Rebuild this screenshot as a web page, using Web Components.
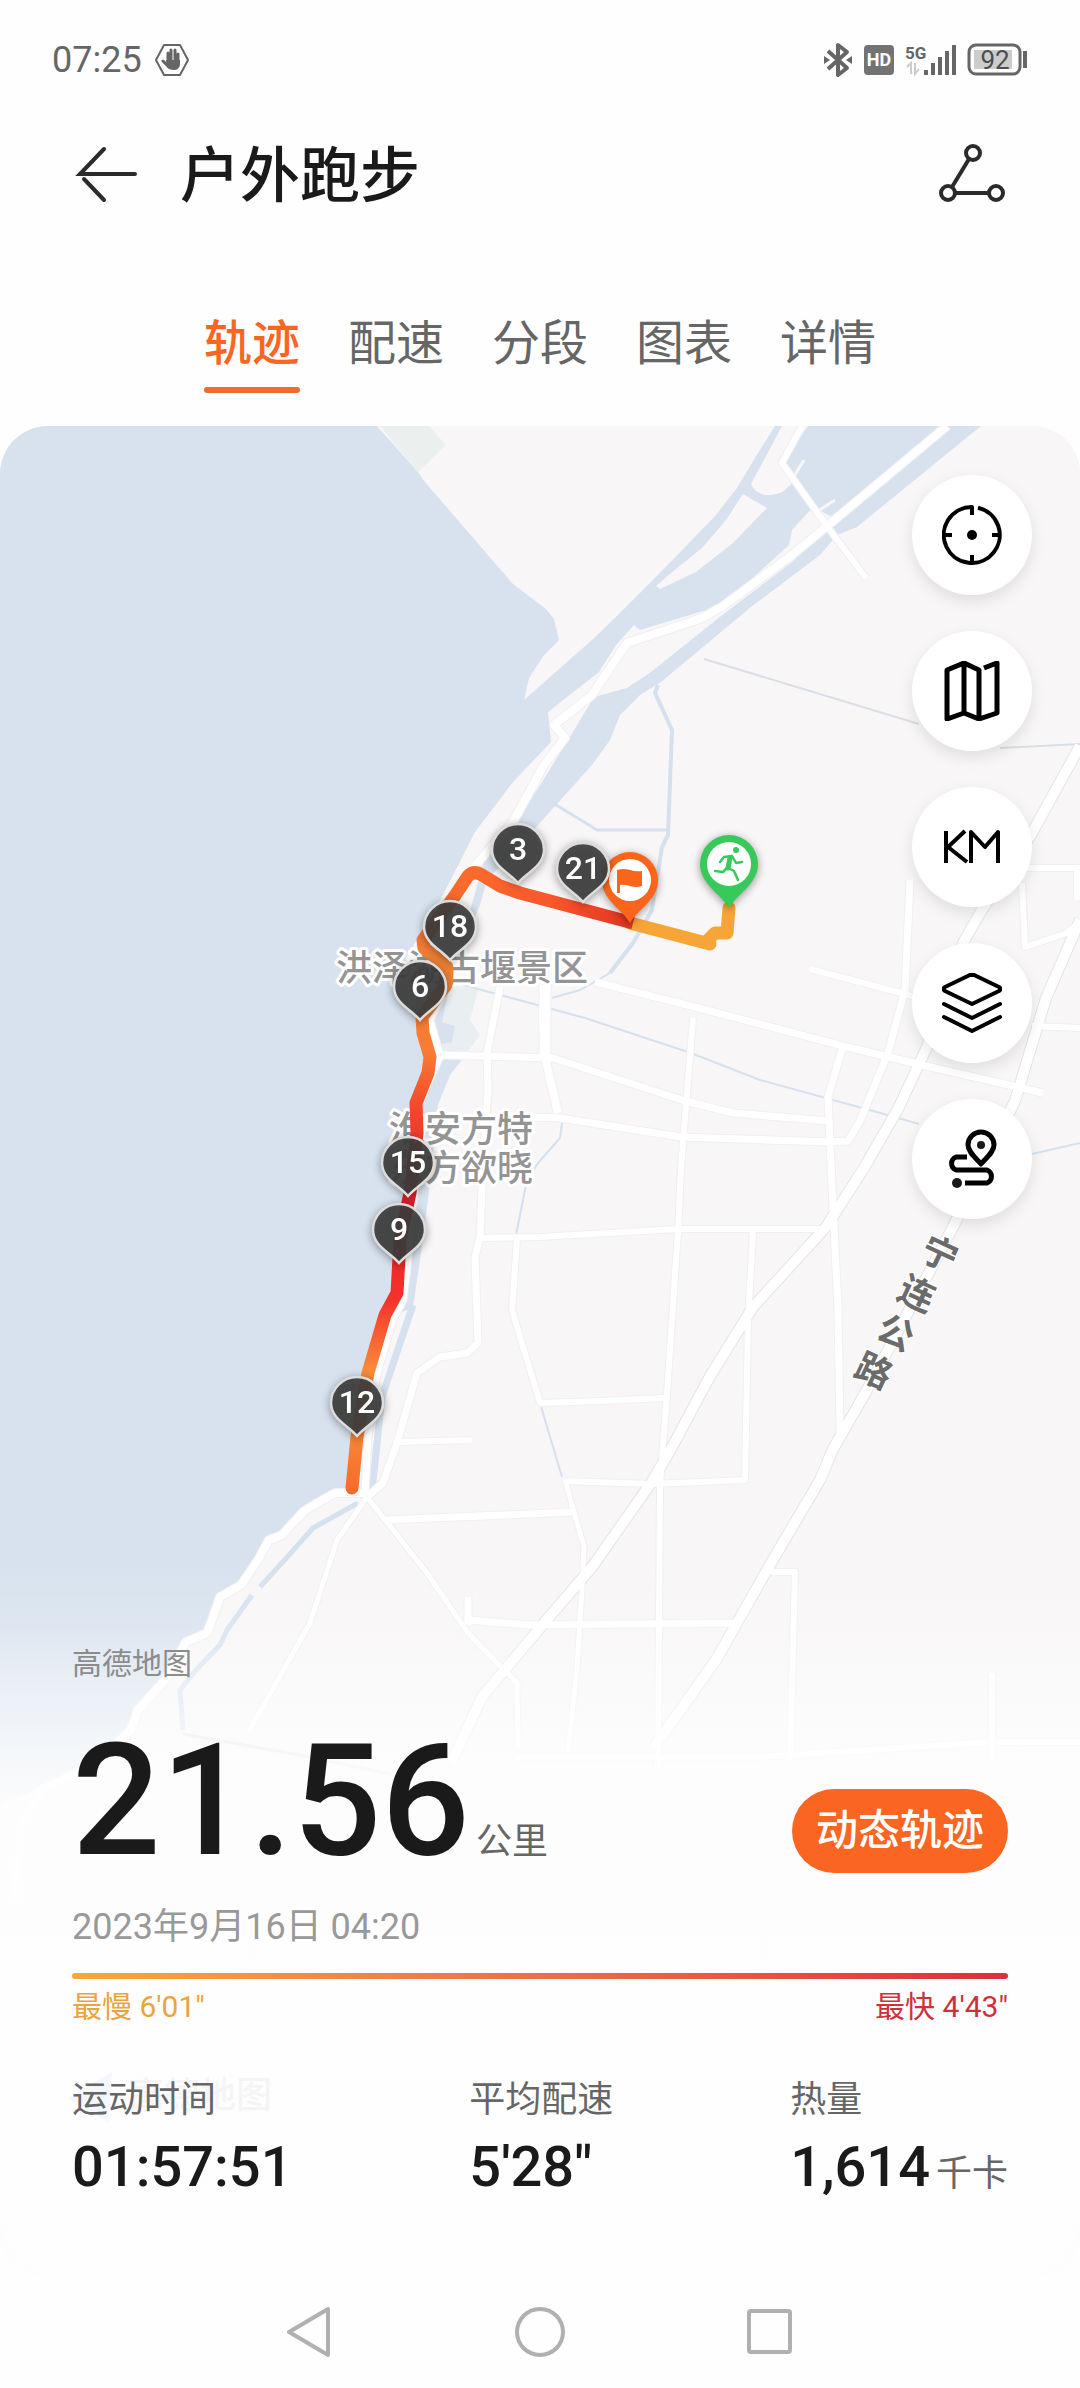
<!DOCTYPE html>
<html lang="zh-CN">
<head>
<meta charset="utf-8">
<meta name="viewport" content="width=device-width, initial-scale=1">
<title>户外跑步</title>
<style>
  :root {
    --accent: #fb6522;
    --ink: #1a1a1a;
    --ink-2: #666;
    --ink-3: #999;
    --gutter: 72px;
  }

  body {
    margin: 0;
    min-height: 100vh;
    display: flex;
    flex-direction: column;
    background: #fefefe;
    color: var(--ink);
    font-family: Roboto, "Noto Sans CJK SC", sans-serif;
  }
</style>
</head>
<body>
  <status-bar time="07:25" battery="92"></status-bar>
  <app-header>户外跑步</app-header>
  <tab-strip tabs="轨迹,配速,分段,图表,详情"></tab-strip>

  <track-card>
    <track-map slot="map"></track-map>
    <map-tool slot="tools" label="定位">
      <svg viewBox="0 0 60 60" stroke-width="4">
        <path d="M36 2.700A28 28 0 1 1 30 2V10M2 30H10M50 30H58M30 50V58"/>
        <circle cx="30" cy="30" r="5" fill="#000" stroke="none"/>
      </svg>
    </map-tool>
    <map-tool slot="tools" label="地图类型">
      <svg viewBox="0 0 60 60" stroke-width="5">
        <path d="M42 7 55 2V52L37 58 22 52 5 58V9L22 2 37 9V58M22 2V52"/>
      </svg>
    </map-tool>
    <map-tool slot="tools" label="公里标记">
      <svg viewBox="0 0 60 60" stroke-width="4">
        <path d="M4 14V46M23 14 6 30 25 45M29 46V15L43 30 56 15V46"/>
      </svg>
    </map-tool>
    <map-tool slot="tools" label="图层">
      <svg viewBox="0 0 60 60" stroke-width="4" stroke-linecap="round">
        <path d="M30 1 57 14Q60 16 57 18L30 31 3 18Q0 16 3 14ZM2 31 30 45 58 31M2 44 30 58 58 44"/>
      </svg>
    </map-tool>
    <map-tool slot="tools" label="路线">
      <svg viewBox="0 0 60 60" stroke="#1a1a1a" stroke-width="5">
        <path d="M39 35C34 29 26 23 26 16A13 13 0 0 1 52 16C52 23 44 29 39 35ZM25 28H14A7 7 0 0 0 14 41H45A7 7 0 0 1 45 54H23" stroke-linecap="butt"/>
        <circle cx="39" cy="16" r="4" fill="#1a1a1a" stroke="none"/>
        <circle cx="15" cy="54" r="5" fill="#1a1a1a" stroke="none"/>
      </svg>
    </map-tool>
    <run-summary slot="summary">
      <stat-item label="运动时间" value="01:57:51"></stat-item>
      <stat-item label="平均配速" value="5'28&quot;"></stat-item>
      <stat-item label="热量" value="1,614" unit="千卡"></stat-item>
    </run-summary>
  </track-card>

  <system-nav></system-nav>

<script>
class BaseElement extends HTMLElement {
  constructor() {
    super();
    this.attachShadow({ mode: 'open' });
  }

  connectedCallback() {
    this.shadowRoot.innerHTML = `<style>${this.constructor.styles}</style>${this.render()}`;
  }
}

class StatusBar extends BaseElement {
  static get styles() {
    return /* css */`
      :host {
        display: flex;
        justify-content: space-between;
        align-items: center;
        height: 120px;
        padding: 0 52px;
        color: #666;
      }
      .side { display: flex; align-items: center; gap: 12px; }
      .time { font-size: 36px; line-height: 48px; }
      svg { display: block; overflow: visible; }
      text { font-family: Roboto, sans-serif; }
    `;
  }

  render() {
    return /* html */`
      <div class="side">
        <span class="time">${this.getAttribute('time')}</span>
        <svg width="36" height="36" viewBox="0 0 36 36">
          <path d="M10 3H26L34 18 26 33H10L2 18Z" fill="none" stroke="#666" stroke-width="2" stroke-linejoin="round"/>
          <path d="M14 19V11M17 19V8M21 19V8M24 20V12M15 25 9 19" fill="none" stroke="#666" stroke-width="3" stroke-linecap="round"/>
          <path d="M12 18H26V23Q25 28 20 28 15 28 13 25Z" fill="#666"/>
        </svg>
      </div>
      <div class="side">
        <svg width="28" height="36" viewBox="0 0 28 36">
          <path d="M4 9 23 26 14 33V3L23 10 4 27" fill="none" stroke="#666" stroke-width="4" stroke-linejoin="round"/>
          <path d="M0 14 6 18 0 22ZM28 14 22 18 28 22Z" fill="#666"/>
        </svg>
        <svg width="30" height="30" viewBox="0 0 30 30">
          <rect width="30" height="30" rx="4" fill="#737373"/>
          <text x="15" y="21" font-size="18" font-weight="700" fill="#fff" text-anchor="middle">HD</text>
        </svg>
        <svg width="50" height="36" viewBox="0 0 50 36">
          <text x="-1" y="17" font-size="17" font-weight="700" fill="#666">5G</text>
          <path d="M1 25 5 21V32M9 21V32L13 27" fill="none" stroke="#ccc" stroke-width="2"/>
          <path d="M20 33V28M27 33V21M34 33V15M41 33V9M48 33V3" stroke="#666" stroke-width="4"/>
        </svg>
        <svg width="60" height="32" viewBox="0 0 60 32">
          <rect x="1" y="1" width="51" height="29" rx="7" fill="none" stroke="#666" stroke-width="3"/>
          <rect x="6" y="6" width="38" height="19" fill="#ccc"/>
          <path d="M57 7V24" stroke="#666" stroke-width="4"/>
          <text x="27" y="25" font-size="26" fill="#4d4d4d" text-anchor="middle">${this.getAttribute('battery')}</text>
        </svg>
      </div>
    `;
  }
}

class AppHeader extends BaseElement {
  static get styles() {
    return /* css */`
      :host {
        display: flex;
        align-items: center;
        gap: 36px;
        height: 114px;
        padding: 0 var(--gutter);
      }
      h1 { flex: 1; margin: 0; font-size: 60px; font-weight: 500; line-height: 84px; }
      button { padding: 0; border: 0; background: none; }
      svg { display: block; fill: none; stroke: #2b2b2b; stroke-width: 4; }
    `;
  }

  render() {
    return /* html */`
      <button type="button" aria-label="返回">
        <svg width="72" height="72" viewBox="0 0 72 72" stroke-linecap="round">
          <path d="M63 33H8L32 8M12 38 32 59"/>
        </svg>
      </button>
      <h1><slot></slot></h1>
      <button type="button" aria-label="分享轨迹">
        <svg width="72" height="72" viewBox="0 0 72 72" stroke-width="5">
          <circle cx="37" cy="12" r="7"/><circle cx="12" cy="52" r="7"/><circle cx="60" cy="52" r="7"/>
          <path d="M33 18 16 46M19 52H53"/>
        </svg>
      </button>
    `;
  }
}

class TabStrip extends BaseElement {
  static get styles() {
    return /* css */`
      :host { display: block; padding: 72px 0 33px; }
      div { display: flex; justify-content: center; gap: 48px; }
      button {
        padding: 0;
        border: 0;
        background: none;
        color: var(--ink-2);
        font: 400 48px/76px Roboto, "Noto Sans CJK SC", sans-serif;
      }
      button::after {
        content: "";
        display: block;
        height: 6px;
        margin-top: 5px;
        border-radius: 3px;
      }
      button[aria-selected="true"] { color: var(--accent); font-weight: 500; }
      button[aria-selected="true"]::after { background: #ee6c2e; }
    `;
  }

  render() {
    const tabs = this.getAttribute('tabs').split(',');
    return /* html */`
      <div role="tablist">
        ${tabs.map((tab, i) => `<button type="button" role="tab" aria-selected="${i === 0}">${tab}</button>`).join('')}
      </div>
    `;
  }
}

class TrackCard extends BaseElement {
  static get styles() {
    return /* css */`
      :host {
        position: relative;
        flex: 1;
        display: flex;
        flex-direction: column;
        justify-content: space-between;
        overflow: hidden;
        border-radius: 48px;
        background: #f8f6f7;
      }
      .tools {
        position: relative;
        display: flex;
        flex-direction: column;
        align-items: flex-end;
        gap: 36px;
        padding: 49px 48px 0;
      }
      .summary { position: relative; }
    `;
  }

  render() {
    return /* html */`
      <slot name="map"></slot>
      <div class="tools"><slot name="tools"></slot></div>
      <div class="summary"><slot name="summary"></slot></div>
    `;
  }
}

class MapTool extends BaseElement {
  static get styles() {
    return /* css */`
      :host { display: block; }
      button {
        display: grid;
        place-items: center;
        width: 120px;
        height: 120px;
        padding: 0;
        border: 0;
        border-radius: 50%;
        background: #fff;
        box-shadow: 0 6px 16px rgba(0, 0, 0, .1);
      }
      ::slotted(svg) {
        width: 60px;
        height: 60px;
        fill: none;
        stroke: #000;
        stroke-linejoin: round;
      }
    `;
  }

  render() {
    return `<button type="button" aria-label="${this.getAttribute('label')}"><slot></slot></button>`;
  }
}

// Everything on the map shares one coordinate space, y starting at the card's top edge (426).
const ROADS = [
  ['M802 426 782 463 826 525 866 578', 6],
  ['M947 426 826 527 792 555 723 606 702 618 627 643 610 668 592 695 554 725 565 738 544 765 513 822 480 860 445 905', 8],
  ['M595 982 691 1006 843 1046 922 1065 1043 1093', 7],
  ['M440 1055 553 1058 685 1101 733 1113 829 1121', 7],
  ['M530 1117 560 1118 681 1137 829 1142 848 1141 860 1121 888 1053 905 990 910 880', 7],
  ['M693 1018 681 1168 678 1231 667 1394 660 1484 658 1770', 6],
  ['M843 1046 828 1097 833 1208 838 1307 840 1433', 7],
  ['M480 1238 540 1237 678 1229 822 1229', 6],
  ['M753 1231 748 1322 745 1480 651 1484 565 1481', 6],
  ['M565 1480 584 1547 582 1590 577 1667 568 1753', 5],
  ['M367 1497 427 1573 468 1633 517 1683 518 1750', 5],
  ['M468 1597V1625M468 1620 530 1625 737 1623', 7],
  ['M367 1497 337 1540 310 1623 248 1733', 5],
  ['M386 1520 572 1512', 7],
  ['M771 1572H795L790 1760M992 1673V1760M517 1757H757L992 1742H1080', 6],
  ['M367 1497 383 1483 397 1443 417 1373 440 1357 467 1353 478 1343 475 1257 480 1237 483 1160 488 1090 487 1053 500 987', 7],
  ['M397 1442 472 1440', 6],
  ['M517 1240 512 1310 540 1403 600 1401 664 1398', 6],
  ['M547 985 543 1013 545 1057 558 1113', 8],
  ['M545 985V1055', 11],
  ['M810 969 905 994 925 1000', 6],
  ['M1022 868H1080M1022 883 1025 947 1067 933 1080 921M1077 868V900M1032 1026 1080 1028', 6],
  ['M415 960 447 985 430 1020 440 1056 418 1105 417 1160 407 1267 403 1300 393 1320 377 1373 368 1437 365 1493', 7],
  ['M365 1493 335 1493 317 1503 303 1512 282 1535 269 1540 258 1560 241 1585 220 1597 212 1620 207 1633 186 1642 165 1680 138 1710 131 1730 95 1765 41 1790 20 1830 15 1900', 8],
];

const HIGHWAYS = [
  'M1080 746 1032 833 980 913 963 943 927 1047 898 1109 864 1168 826 1227 753 1307 709 1378 671 1449 651 1483 592 1567 544 1623 482 1697 451 1763',
  'M1080 920 1046 998 1015 1101 953 1227 867 1390 833 1449 820 1480 771 1563 716 1660 654 1747',
];

const CANALS = [
  ['M658 685 655 693 672 730 668 835 662 847 652 910 633 943 610 973', 4],
  ['M553 803 597 830H667', 3],
  ['M610 973 580 990 552 998', 2],
  ['M463 985 530 1003 585 1018 691 1053 760 1080 884 1114 919 1124M1032 1154 1080 1143', 2],
  ['M562 1123 560 1138 538 1163 527 1180 515 1240M540 1403 562 1477', 2],
  ['M413 1305 400 1343 382 1397 372 1490', 7],
  ['M358 1503 313 1528 289 1555 260 1587M252 1595 227 1630 220 1645 196 1670 180 1690 183 1730', 5],
];

const PINS = [
  [3, 518, 850], [21, 583, 869], [12, 357, 1403], [9, 399, 1230],
  [15, 408, 1163], [18, 450, 927], [6, 420, 987],
];

class TrackMap extends BaseElement {
  static get styles() {
    return /* css */`
      :host { position: absolute; inset: 0; }
      svg { display: block; width: 100%; height: 100%; }
      .line { fill: none; stroke-linejoin: round; }
      .place {
        font: 500 36px "Noto Sans CJK SC", sans-serif;
        fill: #949494;
        stroke: #fff;
        stroke-width: 6px;
        stroke-linejoin: round;
        paint-order: stroke;
      }
      .road-name { fill: #6b6b6b; font-weight: 700; stroke-width: 2px; }
      .pin text { font: 500 32px Roboto, sans-serif; fill: #fff; text-anchor: middle; }
      .pin { filter: drop-shadow(0 2px 4px rgba(0, 0, 0, .4)); }
      .watermark { font: 500 36px "Noto Sans CJK SC", sans-serif; fill: #444; }
    `;
  }

  line(d, width, color, extra = '') {
    return `<path class="line" d="${d}" stroke="${color}" stroke-width="${width}" ${extra}/>`;
  }

  pin([km, x, y]) {
    return `
      <g class="pin" transform="translate(${x} ${y})">
        <path d="M0 33C-8 23-26 16-26 0A26 26 0 0 1 26 0C26 16 8 23 0 33Z" fill="#3c3c3c" fill-opacity=".9" stroke="#dcdcdc" stroke-width="2.500"/>
        <text y="10">${km}</text>
      </g>`;
  }

  render() {
    return /* html */`
      <svg viewBox="0 426 1080 1850" preserveAspectRatio="xMidYMin slice" role="img" aria-label="跑步轨迹">
        <defs>
          <linearGradient id="east" gradientUnits="userSpaceOnUse" x1="470" y1="0" x2="635" y2="0">
            <stop offset="0" stop-color="#fa6a2c"/><stop offset=".5" stop-color="#f9562c"/><stop offset="1" stop-color="#df3322"/>
          </linearGradient>
          <linearGradient id="south" gradientUnits="userSpaceOnUse" x1="0" y1="890" x2="0" y2="1490">
            <stop offset="0" stop-color="#f8672a"/><stop offset=".12" stop-color="#ee8136"/>
            <stop offset=".27" stop-color="#f87c34"/><stop offset=".36" stop-color="#f5482c"/>
            <stop offset=".52" stop-color="#e51f28"/><stop offset=".68" stop-color="#f5312c"/>
            <stop offset=".8" stop-color="#fa8a38"/><stop offset=".92" stop-color="#f98236"/>
            <stop offset="1" stop-color="#f56c2c"/>
          </linearGradient>
        </defs>

        <!-- land and water -->
        <path fill="#f8f6f7" d="M0 426H1080V2280H0Z"/>
        <path fill="#d7e2ee" d="M0 426H377L418 472 424 481 513 584 546 609 554 619 559 640 544 655 529 678 524 700 592 640 620 613 651 582 689 543 716 515 737 488 755 458 775 426H981L857 527 837 535 820 555 751 607 661 682 640 695 620 715 610 740 592 765 537 826 487 880 480 905 455 965 461 1061 450 1075 438 1105 428 1200 420 1260 413 1307 385 1320 368 1373 357 1437 350 1490 317 1500 282 1533 263 1547 241 1583 220 1595 207 1630 186 1640 165 1675 138 1707 131 1740 41 1788 0 1805Z"/>
        <path fill="#ebf0ee" d="M380 426H429L446 445 418 472Z"/>
        <path fill="#f8f6f7" d="M782 426 751 484Q756 496 771 495 789 493 790 480L782 463 808 426ZM743 494 767 508 733 543 696 572 660 589 656 586 671 573 702 548 726 520Z"/>
        <path fill="#f8f6f7" d="M813 507 792 530 789 545 723 605 640 630 634 625 616 645 599 672 548 712 551 742 513 782 475 832 443 895 405 960 455 965 487 850 503 836 537 790 565 745 576 727 594 697 627 688 651 672 716 620 792 562 838 520Z"/>
        <path fill="#e9eff0" d="M450 985 478 990 470 1020 480 1035 465 1055H435Z"/>
        <path fill="#d7e2ee" d="M440 1022 455 1026 452 1042 438 1045Z"/>
        ${this.line('M704 659 919 724M1000 748 1080 744', 2, '#d9dfe6')}
        ${this.line('M788 486 804 460M812 515 835 500', 3, '#f8f6f7')}
        ${CANALS.map(([d, w]) => this.line(d, w, '#d5e1ee')).join('')}
        ${this.line('M183 1734 300 1755 395 1775', 3, '#e3e3e5')}

        <!-- roads, each with a faint casing -->
        ${ROADS.map(([d, w]) => this.line(d, w + 2, '#f0eff1')).join('')}
        ${HIGHWAYS.map((d) => this.line(d, 12, '#e4e4e6')).join('')}
        ${ROADS.map(([d, w]) => this.line(d, w, '#fff')).join('')}
        ${HIGHWAYS.map((d) => this.line(d, 10, '#fff')).join('')}

        <text class="place" x="336" y="981">洪泽湖古堰景区</text>
        <text class="place" x="389" y="1142">淮安方特</text>
        <text class="place" x="389" y="1181">东方欲晓</text>
        <text class="place road-name" x="918 895 874 852" y="1258 1298 1337 1375" rotate="25">宁连公路</text>
        <path d="M68 2098 112 2072 108 2122Z" fill="#2a7fe8"/>
        <text class="watermark" x="128" y="2108">高德地图</text>

        <!-- the run -->
        ${this.line('M729 908 727 933H715L708 940 710 944 630 923', 13, '#f8a537', 'stroke-linecap="round"')}
        ${this.line('M450 903 468 876Q474 870 482 875L500 886 520 893 633 923', 13, 'url(#east)')}
        ${this.line('M452 900 423 940 424 948 447 967 446 985 422 1017 423 1033 430 1057 428 1073 416 1103 417 1133 410 1193 400 1240 397 1293 385 1315 368 1373 357 1437 352 1488', 13, 'url(#south)', 'stroke-linecap="round"')}

        <g class="pin" transform="translate(729 864)">
          <path d="M0 44C-8 30-29 20-29 0A29 29 0 0 1 29 0C29 20 8 30 0 44Z" fill="#37c95a"/>
          <circle r="22" fill="#fff"/>
          <circle cx="7" cy="-14" r="3" fill="#37c95a"/>
          <path class="line" d="M-9-2-5-7 3-8 7-1 13-2M-1 4 5 7 9 16M-2 4-6 8-14 7" stroke="#37c95a" stroke-width="2.500" stroke-linecap="round"/>
          <path class="line" d="M1-6-1 4" stroke="#37c95a" stroke-width="5" stroke-linecap="round"/>
        </g>
        <g class="pin" transform="translate(630 880)">
          <path d="M0 43C-8 29-28 20-28 0A28 28 0 0 1 28 0C28 20 8 29 0 43Z" fill="#fb651b"/>
          <circle r="21" fill="#fff"/>
          <path d="M-13-10Q-6-12 0-10T12-9V6Q6 8 0 6T-10 5V13H-13Z" fill="#fb651b"/>
        </g>
        ${PINS.map(this.pin).join('')}
      </svg>
    `;
  }
}

class RunSummary extends BaseElement {
  static get styles() {
    return /* css */`
      :host {
        display: block;
        padding: 83px var(--gutter) 77px;
        background: linear-gradient(rgba(254, 254, 254, 0), rgba(254, 254, 254, .15) 60px, rgba(254, 254, 254, .5) 130px, rgba(254, 254, 254, .75) 190px, rgba(254, 254, 254, .93) 250px, rgba(254, 254, 254, .95) 400px);
      }
      p { margin: 0; }
      .source { color: #8c8c8c; font-size: 30px; line-height: 42px; }
      .total { display: flex; justify-content: space-between; align-items: flex-end; margin-top: 36px; }
      .distance { display: flex; align-items: baseline; gap: 6px; }
      .distance strong { font-size: 156px; font-weight: 500; line-height: 160px; }
      .distance span { color: var(--ink-2); font-size: 36px; line-height: 48px; }
      button {
        height: 84px;
        margin-bottom: 8px;
        padding: 0 24px;
        border: 0;
        border-radius: 42px;
        background: var(--accent);
        color: #fff;
        font: 500 42px/84px Roboto, "Noto Sans CJK SC", sans-serif;
      }
      .date { margin-top: 22px; color: var(--ink-3); font-size: 36px; line-height: 48px; }
      .pace {
        height: 6px;
        margin-top: 22px;
        border-radius: 3px;
        background: linear-gradient(90deg, #f6a83b, #ef7a4b 40%, #e95745 70%, #dc2f3c);
      }
      .legend { display: flex; justify-content: space-between; margin-top: 7px; font-size: 30px; line-height: 42px; }
      .slow { color: #eca33c; }
      .fast { color: #d0303a; }
      .stats { display: flex; justify-content: space-between; margin-top: 48px; }
    `;
  }

  render() {
    return /* html */`
      <p class="source">高德地图</p>
      <div class="total">
        <p class="distance"><strong>21.56</strong><span>公里</span></p>
        <button type="button">动态轨迹</button>
      </div>
      <p class="date">2023年9月16日 04:20</p>
      <div class="pace"></div>
      <div class="legend"><span class="slow">最慢 6'01"</span><span class="fast">最快 4'43"</span></div>
      <div class="stats"><slot></slot></div>
    `;
  }
}

class StatItem extends BaseElement {
  static get styles() {
    return /* css */`
      :host { display: block; }
      p { margin: 0; }
      .label { color: var(--ink-2); font-size: 36px; line-height: 48px; }
      .value { display: flex; align-items: baseline; gap: 6px; margin-top: 11px; }
      strong { font-size: 56px; font-weight: 500; line-height: 64px; }
      .unit { color: var(--ink-2); font-size: 36px; line-height: 48px; }
    `;
  }

  render() {
    const unit = this.getAttribute('unit');
    return /* html */`
      <p class="label">${this.getAttribute('label')}</p>
      <p class="value"><strong>${this.getAttribute('value')}</strong>${unit ? `<span class="unit">${unit}</span>` : ''}</p>
    `;
  }
}

class SystemNav extends BaseElement {
  static get styles() {
    return /* css */`
      :host { display: flex; justify-content: center; align-items: center; gap: 176px; height: 112px; }
      button { padding: 0; border: 0; background: none; }
      svg { display: block; width: 54px; height: 54px; fill: none; stroke: #b0b0b0; stroke-width: 4; stroke-linejoin: round; }
    `;
  }

  render() {
    return /* html */`
      <button type="button" aria-label="返回"><svg viewBox="0 0 54 54"><path d="M45 4V50L6 27Z"/></svg></button>
      <button type="button" aria-label="主屏幕"><svg viewBox="0 0 54 54"><circle cx="27" cy="27" r="23"/></svg></button>
      <button type="button" aria-label="最近任务"><svg viewBox="0 0 54 54"><rect x="6" y="6" width="41" height="41" rx="2"/></svg></button>
    `;
  }
}

customElements.define('status-bar', StatusBar);
customElements.define('app-header', AppHeader);
customElements.define('tab-strip', TabStrip);
customElements.define('track-card', TrackCard);
customElements.define('map-tool', MapTool);
customElements.define('track-map', TrackMap);
customElements.define('run-summary', RunSummary);
customElements.define('stat-item', StatItem);
customElements.define('system-nav', SystemNav);
</script>
</body>
</html>
